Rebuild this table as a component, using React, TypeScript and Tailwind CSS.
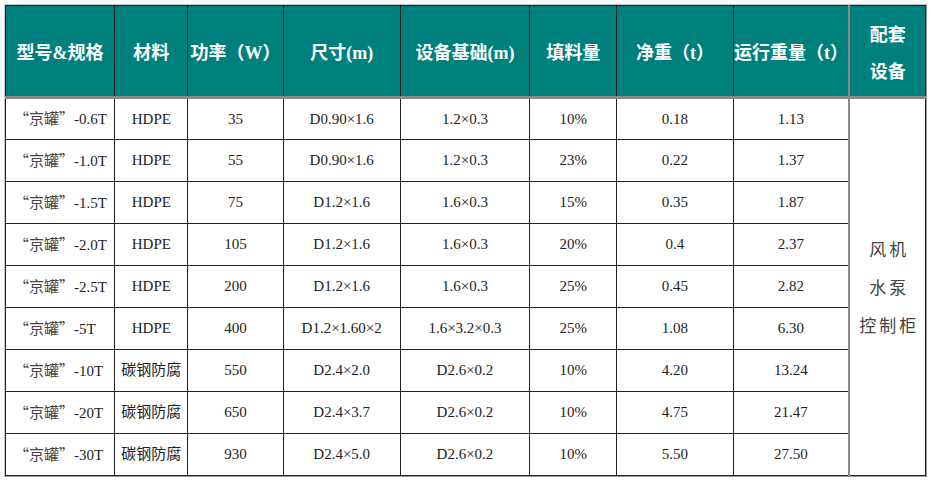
import React from 'react';

const rows = [
    ['-0.6T', 'HDPE', '35', 'D0.90×1.6', '1.2×0.3', '10%', '0.18', '1.13'],
    ['-1.0T', 'HDPE', '55', 'D0.90×1.6', '1.2×0.3', '23%', '0.22', '1.37'],
    ['-1.5T', 'HDPE', '75', 'D1.2×1.6', '1.6×0.3', '15%', '0.35', '1.87'],
    ['-2.0T', 'HDPE', '105', 'D1.2×1.6', '1.6×0.3', '20%', '0.4', '2.37'],
    ['-2.5T', 'HDPE', '200', 'D1.2×1.6', '1.6×0.3', '25%', '0.45', '2.82'],
    ['-5T', 'HDPE', '400', 'D1.2×1.60×2', '1.6×3.2×0.3', '25%', '1.08', '6.30'],
    ['-10T', '碳钢防腐', '550', 'D2.4×2.0', 'D2.6×0.2', '10%', '4.20', '13.24'],
    ['-20T', '碳钢防腐', '650', 'D2.4×3.7', 'D2.6×0.2', '10%', '4.75', '21.47'],
    ['-30T', '碳钢防腐', '930', 'D2.4×5.0', 'D2.6×0.2', '10%', '5.50', '27.50'],
];

const headers = ['型号&规格', '材料', '功率（W）', '尺寸(m)', '设备基础(m)', '填料量', '净重（t）', '运行重量（t）'];
const widths = ['w-[109px]', 'w-[73px]', 'w-[95px]', 'w-[117px]', 'w-[129px]', 'w-[87px]', 'w-[116px]', 'w-[116px]', 'w-[76px]'];

const cjk = { fontFamily: '"Noto Sans CJK SC", sans-serif' };

export default function App() {
    return (
        <div className="w-[931px] h-[485px] bg-white pt-[4px] pl-[4px]" style={{ fontFamily: '"Liberation Serif", "Noto Sans CJK SC", serif' }}>
            <div className="w-[923px] border border-[#c8c8c8] border-r-[#9a9a9a] border-b-[#9a9a9a]">
                <table className="w-[921px] table-fixed border-collapse border border-[#555]">
                    <colgroup>
                        {widths.map((w, i) => <col key={i} className={w} />)}
                    </colgroup>
                    <thead>
                        <tr className="h-[92px] bg-[#00807c] text-white">
                            {headers.map((h, i) => (
                                <th key={i} className="border border-[#222] border-b-[3px] border-b-[#8a8a8a] text-[18px] font-bold text-center p-0 pt-[5px] whitespace-nowrap">
                                    {h}
                                </th>
                            ))}
                            <th className="border border-[#222] border-l-2 border-l-[#8a8a8a] border-b-[3px] border-b-[#8a8a8a] text-[18px] font-bold text-center p-0 pt-[6px] leading-[37px]">
                                配套<br />设备
                            </th>
                        </tr>
                    </thead>
                    <tbody>
                        {rows.map((r, ri) => (
                            <tr key={ri} className="h-[42px]">
                                {r.map((c, ci) => (
                                    <td
                                        key={ci}
                                        className={
                                            'border border-[#222] text-[15px] text-[#222] p-0 whitespace-nowrap ' +
                                            (ci === 0 ? 'text-left pl-[8px]' : 'text-center')
                                        }
                                    >
                                        {ci === 0 ? (
                                            <>
                                                <span style={cjk} className="text-[#444]">“京罐”</span>
                                                {c}
                                            </>
                                        ) : c}
                                    </td>
                                ))}
                                {ri === 0 && (
                                    <td rowSpan={9} className="border border-[#222] border-l-2 border-l-[#8a8a8a] text-center text-[17px] text-[#444] tracking-[3px] leading-[38px] p-0 pl-[3px] pt-[4px]">
                                        风机<br />水泵<br />控制柜
                                    </td>
                                )}
                            </tr>
                        ))}
                    </tbody>
                </table>
            </div>
        </div>
    );
}
